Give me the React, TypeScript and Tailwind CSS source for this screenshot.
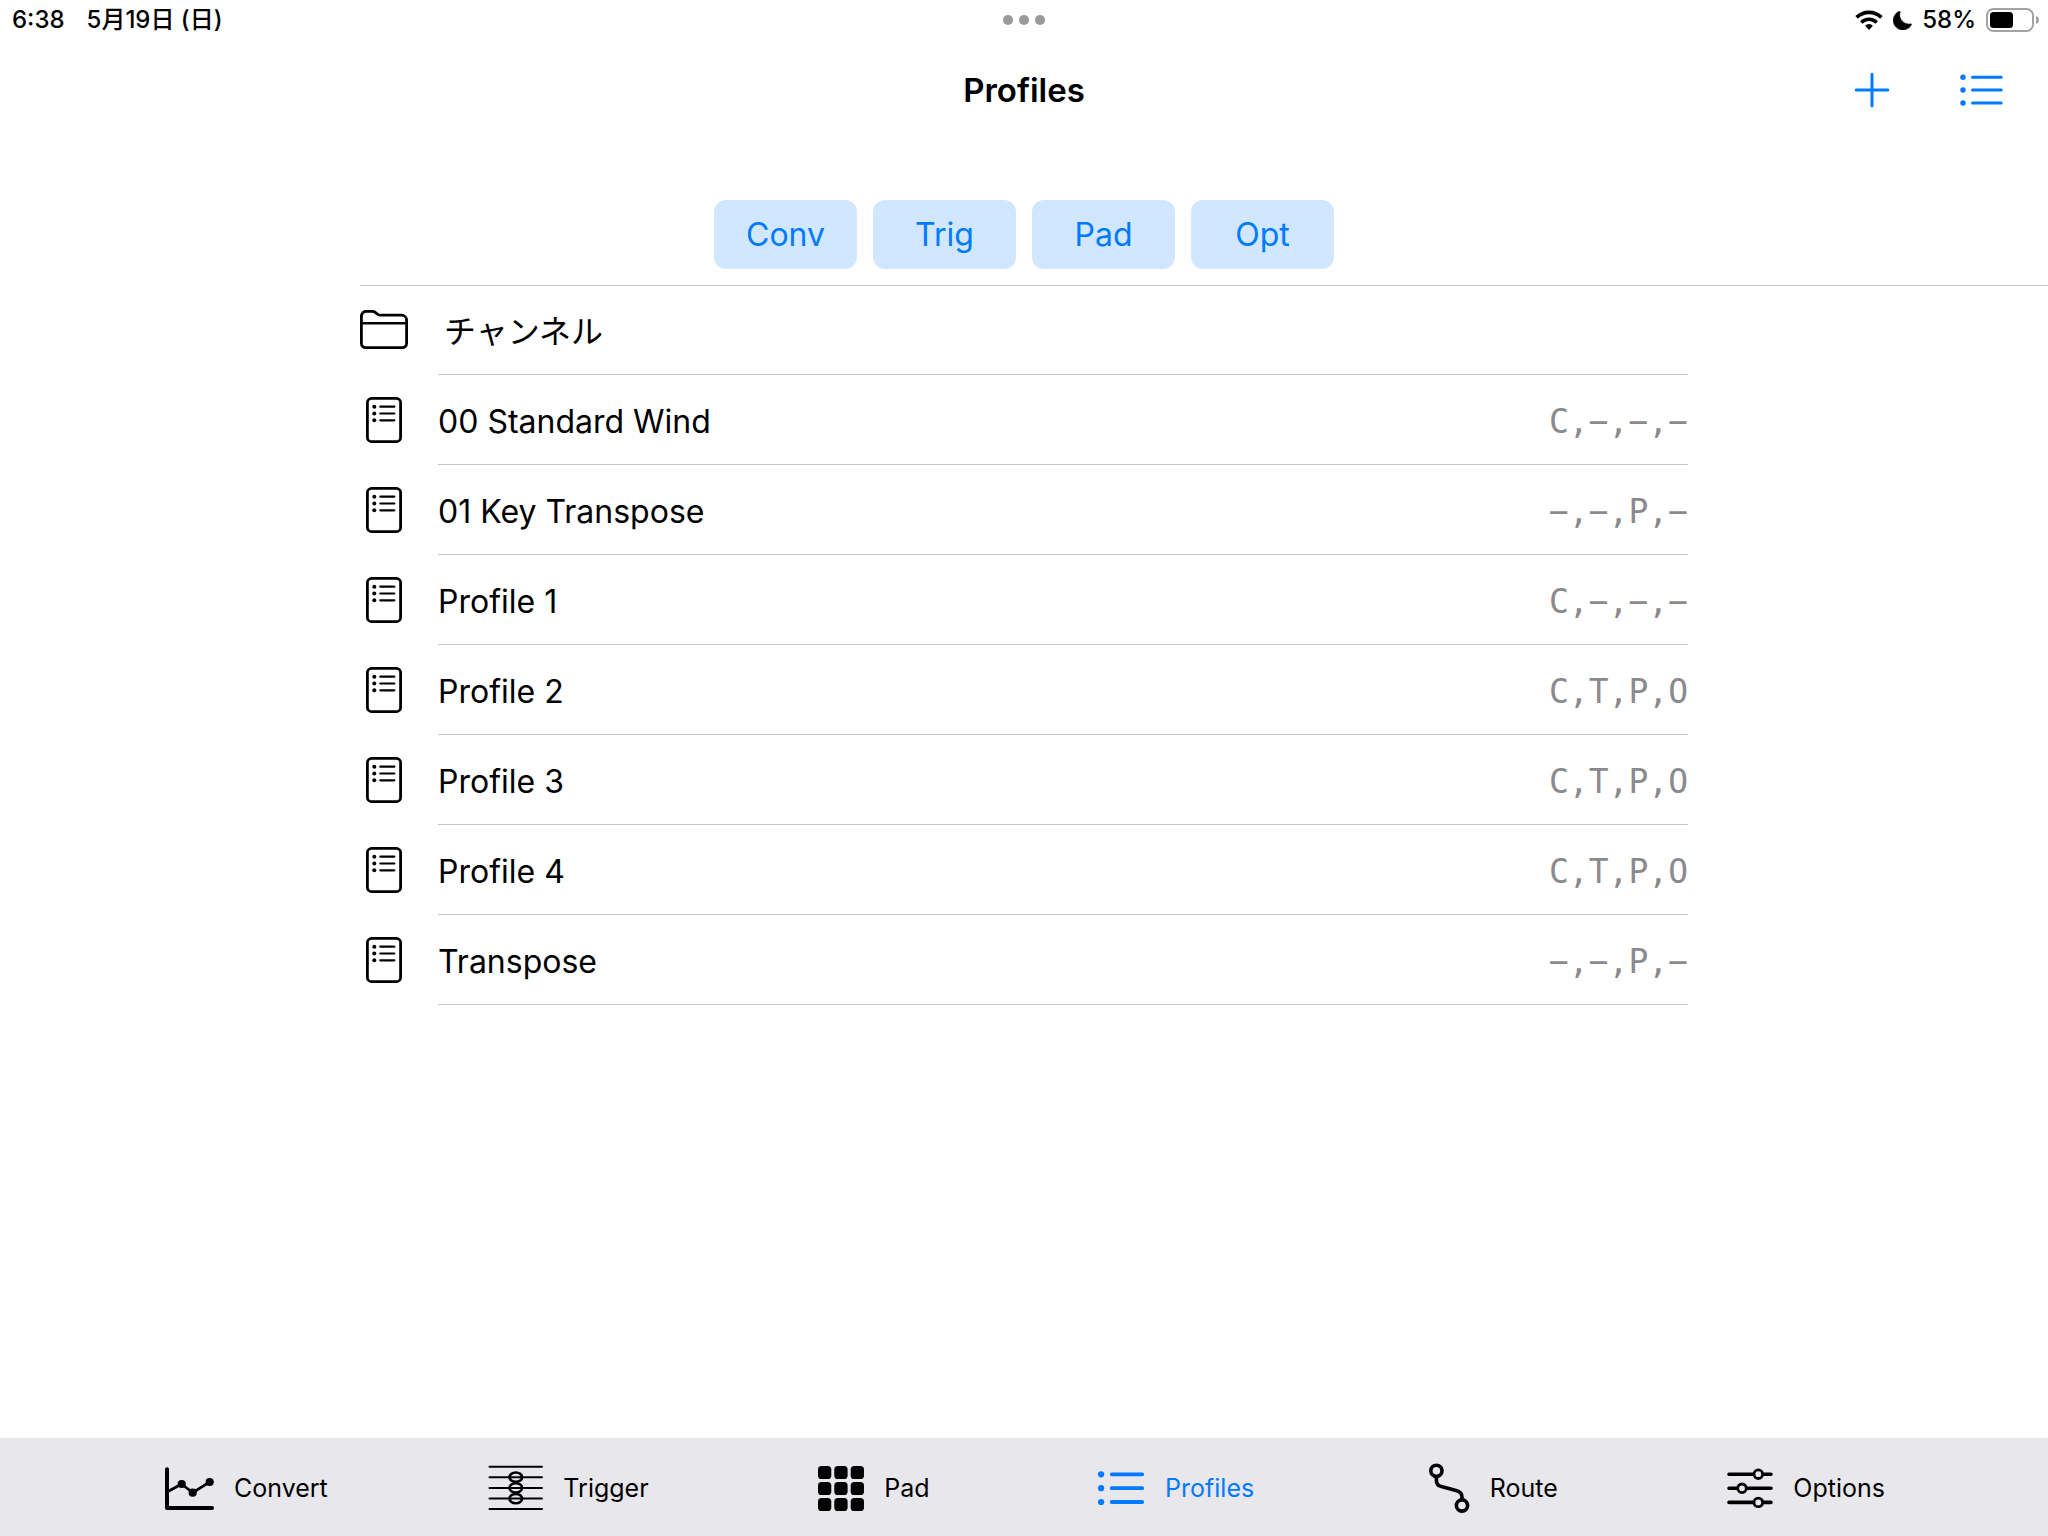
import React from "react";

const ink = "#000000";

function WifiIcon() {
  return (
    <svg width="28" height="20" viewBox="0 0 28 20" fill="none" stroke={ink} aria-hidden="true">
      <path d="M1.600 7.400a17.600 17.600 0 0 1 24.800 0" strokeWidth="3.700" />
      <path d="M6.300 12.500a11 11 0 0 1 15.400 0" strokeWidth="3.500" />
      <path d="M14 19.900l-3.900-4.200a5.400 5.400 0 0 1 7.800 0z" fill={ink} stroke="none" />
    </svg>
  );
}

function MoonIcon() {
  return (
    <svg width="19" height="19" viewBox="0 0 19 19" fill={ink} aria-hidden="true">
      <path d="M6.300 0.300c.6-.2 1.100.2.900.9a9 9 0 0 0 10.500 11.500c.7-.1 1.100.4.8 1A9.700 9.700 0 1 1 6.300.3z" stroke={ink} strokeWidth="0.400" />
    </svg>
  );
}

function BatteryIcon() {
  return (
    <svg width="54" height="24" viewBox="0 0 54 24" fill="none" aria-hidden="true">
      <rect x="1" y="1" width="46" height="22" rx="6.500" stroke="#a3a3a3" strokeWidth="2" />
      <rect x="4" y="4" width="23" height="16" rx="3.500" fill={ink} />
      <path d="M50 8c2 .6 3 2.200 3 4s-1 3.400-3 4z" fill="#a3a3a3" />
    </svg>
  );
}

function PlusIcon() {
  return (
    <svg width="36" height="36" viewBox="0 0 36 36" fill="none" stroke="currentColor" strokeWidth="3" strokeLinecap="round" aria-hidden="true">
      <path d="M18 2.200v31.600M2.200 18h31.600" />
    </svg>
  );
}

function BulletsIcon() {
  return (
    <svg width="44" height="36" viewBox="0 0 44 36" fill="none" stroke="currentColor" strokeWidth="3" strokeLinecap="round" aria-hidden="true">
      <path d="M12.500 5.200h28.700M12.500 18h28.700M12.500 31h28.700" />
      <g fill="currentColor" stroke="none">
        <circle cx="3" cy="5.200" r="2.700" />
        <circle cx="3" cy="18" r="2.700" />
        <circle cx="3" cy="31" r="2.700" />
      </g>
    </svg>
  );
}

function FolderIcon() {
  return (
    <svg width="48" height="40" viewBox="0 0 48 40" fill="none" stroke={ink} strokeWidth="2.800" aria-hidden="true">
      <path d="M1.400 34V6.300a5 5 0 0 1 5-5H12c1.600 0 2.600.4 3.600 1.300l2 1.700c.7.600 1.400.9 2.400.9h21.600a5 5 0 0 1 5 5V33.500a4.200 4.200 0 0 1-4.200 4.200H5.600a4.200 4.200 0 0 1-4.200-4.200z" />
      <path d="M1.400 13.300h45.200" strokeWidth="2.400" />
    </svg>
  );
}

function DocIcon() {
  return (
    <svg width="36" height="46" viewBox="0 0 36 46" fill="none" stroke={ink} aria-hidden="true">
      <rect x="1.400" y="1.400" width="33.200" height="43.200" rx="4.200" strokeWidth="2.800" />
      <path d="M14.300 9.700h14M14.300 16.500h14M14.300 23.300h14" strokeWidth="2.200" strokeLinecap="round" />
      <g fill={ink} stroke="none">
        <circle cx="8.300" cy="9.700" r="2" />
        <circle cx="8.300" cy="16.500" r="2" />
        <circle cx="8.300" cy="23.300" r="2" />
      </g>
    </svg>
  );
}

const tabs = [
  {
    label: "Convert",
    icon: (
      <svg className="shrink-0" width="49" height="52" viewBox="0 0 49 52" fill="none" stroke="currentColor" strokeLinecap="round" strokeLinejoin="round" aria-hidden="true">
        <path d="M2 6.300V45h45" strokeWidth="4" />
        <path d="M2.500 28.800L16.700 21l11 8.700 17-10.700" strokeWidth="2.700" />
        <g fill="currentColor" stroke="none">
          <circle cx="16.700" cy="21" r="4.100" />
          <circle cx="27.700" cy="29.700" r="4.100" />
          <circle cx="44.700" cy="19" r="4.100" />
        </g>
      </svg>
    ),
  },
  {
    label: "Trigger",
    icon: (
      <svg className="shrink-0" width="55" height="52" viewBox="0 0 55 52" fill="none" stroke="currentColor" aria-hidden="true">
        <path d="M1.500 3.700h52.500M1.500 14.300h52.500M1.500 25h52.500M1.500 35.500h52.500M1.500 46h52.500" strokeWidth="2" strokeLinecap="round" />
        <g strokeWidth="2.600">
          <ellipse cx="27.800" cy="14.200" rx="6.300" ry="4.700" />
          <ellipse cx="27.800" cy="24.900" rx="6.300" ry="4.700" />
          <ellipse cx="27.800" cy="35.600" rx="6.300" ry="4.700" />
        </g>
      </svg>
    ),
  },
  {
    label: "Pad",
    icon: (
      <svg className="shrink-0" width="46" height="52" viewBox="0 0 46 52" fill="currentColor" aria-hidden="true">
        {[3, 19, 35].map((y) =>
          [0, 16.3, 32.7].map((x) => <rect key={`${x}-${y}`} x={x} y={y} width="13.300" height="13" rx="3.600" />)
        )}
      </svg>
    ),
  },
  {
    label: "Profiles",
    active: true,
    icon: (
      <svg className="shrink-0" width="47" height="52" viewBox="0 0 47 52" fill="none" stroke="currentColor" strokeWidth="3.800" strokeLinecap="round" aria-hidden="true">
        <path d="M13.700 11.300h30.500M13.700 25.200h30.500M13.700 39h30.500" />
        <g fill="currentColor" stroke="none">
          <circle cx="3.100" cy="11.300" r="3.100" />
          <circle cx="3.100" cy="25.200" r="3.100" />
          <circle cx="3.100" cy="39" r="3.100" />
        </g>
      </svg>
    ),
  },
  {
    label: "Route",
    icon: (
      <svg className="shrink-0" width="41" height="52" viewBox="0 0 41 52" fill="none" stroke="currentColor" strokeWidth="3.600" aria-hidden="true">
        <circle cx="7.400" cy="7.800" r="5.600" />
        <circle cx="33" cy="42.500" r="5.600" />
        <path d="M7.400 14v3.500c0 3.500 2 5.300 5 6.100l14.600 3.800c4 1 6 3 6 6.600v3" />
      </svg>
    ),
  },
  {
    label: "Options",
    icon: (
      <svg className="shrink-0" width="46" height="52" viewBox="0 0 46 52" fill="none" stroke="currentColor" aria-hidden="true">
        <path d="M2 11.200h42M2 25.300h42M2 39.400h42" strokeWidth="3.600" strokeLinecap="round" />
        <g fill="#e8e7ec" strokeWidth="2.800">
          <circle cx="31.300" cy="11.200" r="4.300" />
          <circle cx="15" cy="25.300" r="4.300" />
          <circle cx="31.300" cy="39.400" r="4.300" />
        </g>
      </svg>
    ),
  },
];

const filters = ["Conv", "Trig", "Pad", "Opt"];

const profiles = [
  { name: "00 Standard Wind", flags: "C,−,−,−" },
  { name: "01 Key Transpose", flags: "−,−,P,−" },
  { name: "Profile 1", flags: "C,−,−,−" },
  { name: "Profile 2", flags: "C,T,P,O" },
  { name: "Profile 3", flags: "C,T,P,O" },
  { name: "Profile 4", flags: "C,T,P,O" },
  { name: "Transpose", flags: "−,−,P,−" },
];

export default function App() {
  return (
    <div className="flex min-h-screen flex-col bg-white font-['Inter','Noto_Sans_CJK_JP',sans-serif] text-black">
      <div className="grid h-10 grid-cols-3 items-center text-[24px] leading-none font-medium">
        <div className="flex items-center gap-[22px] pl-3">
          <span>6:38</span>
          <span>5月19日 (日)</span>
        </div>
        <div className="flex justify-center gap-1.5" aria-hidden="true">
          <span className="size-2.5 rounded-full bg-[#999999]" />
          <span className="size-2.5 rounded-full bg-[#999999]" />
          <span className="size-2.5 rounded-full bg-[#999999]" />
        </div>
        <div className="flex items-center justify-end gap-2.5 pr-2">
          <WifiIcon />
          <MoonIcon />
          <span>58%</span>
          <BatteryIcon />
        </div>
      </div>

      <header className="grid h-[100px] grid-cols-3 items-center">
        <h1 className="col-start-2 text-center text-[33px] leading-10 font-semibold">Profiles</h1>
        <div className="flex items-center justify-end gap-[70px] pr-11 text-[#007aff]">
          <button type="button" aria-label="Add profile">
            <PlusIcon />
          </button>
          <button type="button" aria-label="Edit list">
            <BulletsIcon />
          </button>
        </div>
      </header>

      <main className="flex-1">
        <div className="flex justify-center gap-4 pt-[60px] pb-4">
          {filters.map((label) => (
            <button
              key={label}
              type="button"
              className="h-[69px] w-[143px] rounded-xl bg-[#d1e7ff] text-[32px] text-[#007aff]"
            >
              {label}
            </button>
          ))}
        </div>
        <div className="ml-[calc(50%-664px)] h-px bg-[#c6c6c8]" />
        <ul className="mx-auto -mt-px max-w-[1328px] text-[32px]">
          <li className="flex h-[90px] items-center gap-[30px]">
            <span className="flex w-12 justify-center">
              <FolderIcon />
            </span>
            <div className="flex flex-1 items-center self-stretch border-b border-[#c6c6c8] pt-1 pl-1.5">
              チャンネル
            </div>
          </li>
          {profiles.map((p) => (
            <li key={p.name} className="flex h-[90px] items-center gap-[30px]">
              <span className="flex w-12 justify-center">
                <DocIcon />
              </span>
              <div className="flex flex-1 items-center justify-between self-stretch border-b border-[#c6c6c8] pt-1">
                <span>{p.name}</span>
                <span className="font-['DejaVu_Sans_Mono',monospace] text-[33px] text-[#8a8a8e]">{p.flags}</span>
              </div>
            </li>
          ))}
        </ul>
      </main>

      <nav className="flex h-[98px] items-center justify-between bg-[#e8e7ec] pt-1 pr-[163px] pl-[166px] text-[25px]">
        {tabs.map((tab) => (
          <button
            key={tab.label}
            type="button"
            className={tab.active ? "flex items-center gap-5 text-[#007aff]" : "flex items-center gap-5"}
          >
            <span className="flex w-12 justify-end">{tab.icon}</span>
            <span>{tab.label}</span>
          </button>
        ))}
      </nav>
    </div>
  );
}
